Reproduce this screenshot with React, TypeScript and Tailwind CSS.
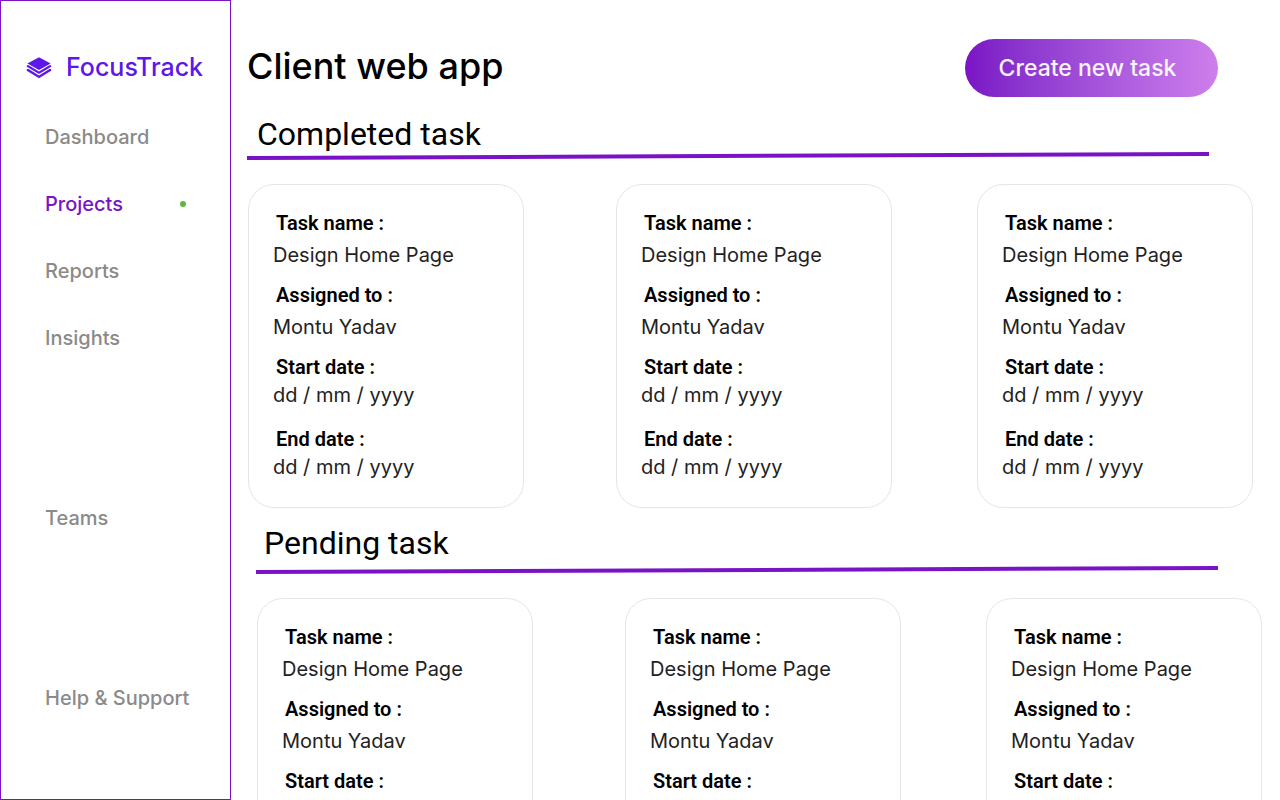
type Field = { label: string; value: string; tight?: boolean };

const fields: Field[] = [
  { label: "Task name :", value: "Design Home Page" },
  { label: "Assigned to :", value: "Montu Yadav" },
  { label: "Start date :", value: "dd / mm / yyyy", tight: true },
  { label: "End date :", value: "dd / mm / yyyy", tight: true },
];

function Logo() {
  return (
    <svg viewBox="0 0 26 22" className="h-[22px] w-[26px] shrink-0" fill="#5d17eb" aria-hidden="true">
      <path d="M13 0.2 24.6 6.4 13 13 1.4 6.4Z" />
      <path d="M0.8 8.2 2.6 8.2 13 14.4 23.4 8.2 25.2 8.2V9.8L13 16.9 0.8 9.8Z" />
      <path d="M0.8 12 2.6 12 13 18.4 23.4 12 25.2 12V13.8L13 21.2 0.8 13.8Z" />
    </svg>
  );
}

function NavItem({ label, active = false }: { label: string; active?: boolean }) {
  return (
    <a
      href="#"
      aria-current={active ? "page" : undefined}
      className={
        active
          ? "flex h-7 items-center justify-between text-xl font-medium text-[#7a12c5]"
          : "flex h-7 items-center text-xl font-medium text-[#8a8a8a]"
      }
    >
      {label}
      {active && <span className="size-1.5 rounded-full bg-[#5fb83a]" />}
    </a>
  );
}

function Sidebar() {
  return (
    <aside className="flex h-full w-[231px] shrink-0 flex-col border border-[#7a12c5] pt-[51px]">
      <a href="#" className="flex h-8 items-center gap-3.5 pl-[25px] text-[25px] font-medium text-[#5d17eb]">
        <Logo />
        FocusTrack
      </a>
      <nav className="mt-[39px] flex flex-col px-11">
        <div className="flex flex-col gap-[39px]">
          <NavItem label="Dashboard" />
          <NavItem label="Projects" active />
          <NavItem label="Reports" />
          <NavItem label="Insights" />
        </div>
        <div className="mt-[152px] flex flex-col gap-[152px] whitespace-nowrap">
          <NavItem label="Teams" />
          <NavItem label="Help &amp; Support" />
        </div>
      </nav>
    </aside>
  );
}

function TaskCard() {
  return (
    <article className="w-full max-w-[276px] rounded-[26px] border border-[#e6e6e6] px-6 pt-[26px] pb-2">
      <dl className="grid auto-rows-[72px]">
        {fields.map((field) => (
          <div key={field.label} className={field.tight ? "flex flex-col gap-1" : "flex flex-col gap-2"}>
            <dt className="pl-[3px] font-[Roboto,sans-serif] text-xl leading-6 font-semibold text-black">
              {field.label}
            </dt>
            <dd className="text-xl leading-6 whitespace-nowrap text-[#222222]">{field.value}</dd>
          </div>
        ))}
      </dl>
    </article>
  );
}

type TaskSectionProps = { title: string; className: string; headingClassName: string };

function TaskSection({ title, className, headingClassName }: TaskSectionProps) {
  return (
    <section className={className}>
      <h2 className={`font-[Roboto,sans-serif] text-[32px] leading-9 text-black ${headingClassName}`}>{title}</h2>
      <svg viewBox="0 0 962 8" preserveAspectRatio="none" className="block h-2 w-[calc(100%-44px)]" aria-hidden="true">
        <path d="M0 6 962 2" stroke="#7a12c5" strokeWidth="4" />
      </svg>
      <div className="mt-6 grid grid-cols-[368fr_361fr_276fr] pl-px">
        <TaskCard />
        <TaskCard />
        <TaskCard />
      </div>
    </section>
  );
}

export default function App() {
  return (
    <div className="flex h-screen overflow-hidden bg-white font-[Inter,sans-serif]">
      <Sidebar />
      <main className="min-w-0 flex-1 overflow-y-auto [scrollbar-width:none]">
        <header className="flex items-center justify-between pt-[39px] pr-[62px] pl-4">
          <h1 className="pb-1 text-4xl leading-[54px] font-medium text-black">Client web app</h1>
          <button
            type="button"
            className="h-[58px] w-[253px] rounded-full bg-linear-to-r from-[#7a12c5] to-[#cf7eec] pr-2 text-[23px] font-medium text-[#f8f4fb]"
          >
            Create new task
          </button>
        </header>
        <TaskSection title="Completed task" className="mt-[19px] pr-[27px] pl-4" headingClassName="pl-2.5" />
        <TaskSection title="Pending task" className="mt-[17px] pr-[18px] pb-10 pl-[25px]" headingClassName="mb-[5px] pl-2" />
      </main>
    </div>
  );
}
